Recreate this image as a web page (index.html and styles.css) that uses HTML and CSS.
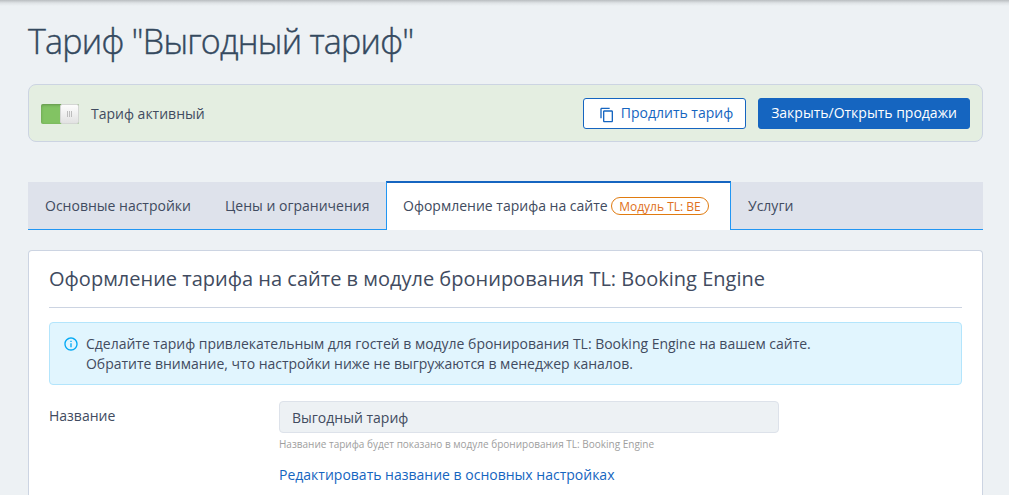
FILE: index.html
```html
<!DOCTYPE html>
<html lang="ru">
<head>
  <meta charset="UTF-8" />
  <meta name="viewport" content="width=device-width, initial-scale=1.0"/>
  <title>Тариф "Выгодный тариф"</title>
  <link rel="stylesheet" href="styles.css">
</head>
<body>

  <div class="page">
    <h1>Тариф "Выгодный тариф"</h1>

    <div class="status-bar">
      <div class="switch"><div class="switch-knob"><i></i><i></i><i></i></div></div>
      <span class="status-text">Тариф активный</span>
      <button class="btn btn-outline">
        <svg class="copy-icon" width="16" height="16" viewBox="0 0 24 24" fill="currentColor">
          <path d="M16 1H4C2.900 1 2 1.900 2 3v14h2V3h12V1zm3 4H8C6.900 5 6 5.900 6 7v14c0 1.100.9 2 2 2h11c1.100 0 2-.9 2-2V7c0-1.100-.9-2-2-2zm0 16H8V7h11v14z"/>
        </svg>
        <span>Продлить тариф</span>
      </button>
      <button class="btn btn-primary">Закрыть/Открыть продажи</button>
    </div>

    <div class="tabs">
      <div class="tab tab-settings">Основные настройки</div>
      <div class="tab tab-prices">Цены и ограничения</div>
      <div class="tab tab-site active"><span>Оформление тарифа на сайте</span><span class="badge">Модуль TL: BE</span></div>
      <div class="tab">Услуги</div>
    </div>

    <div class="card">
      <h2>Оформление тарифа на сайте в модуле бронирования TL: Booking Engine</h2>

      <div class="info">
        <svg class="info-icon" width="16" height="16" viewBox="0 0 24 24" fill="currentColor">
          <path d="M11 7h2v2h-2zm0 4h2v6h-2zm1-9C6.480 2 2 6.480 2 12s4.480 10 10 10 10-4.480 10-10S17.520 2 12 2zm0 18c-4.410 0-8-3.590-8-8s3.590-8 8-8 8 3.590 8 8-3.590 8-8 8z"/>
        </svg>
        <p>Сделайте тариф привлекательным для гостей в модуле бронирования TL: Booking Engine на вашем сайте.<br>Обратите внимание, что настройки ниже не выгружаются в менеджер каналов.</p>
      </div>

      <div class="form-row">
        <label for="tariffName">Название</label>
        <div class="field">
          <input type="text" id="tariffName" value="Выгодный тариф" readonly />
          <div class="hint">Название тарифа будет показано в модуле бронирования TL: Booking Engine</div>
          <a href="#">Редактировать название в основных настройках</a>
        </div>
      </div>
    </div>
  </div>

</body>
</html>
```
FILE: styles.css
```css
:root {
  --bg-color: #edf1f4;
  --text-color: #414b60;
  --border-color: #ccd4e2;
  --accent-color: #1565c0;
  --tab-line: #2196f3;
}

* {
  margin: 0;
  padding: 0;
  box-sizing: border-box;
}

body {
  font-family: 'Open Sans', sans-serif;
  font-size: 14px;
  line-height: 20px;
  background: linear-gradient(#b9bdc0, #dfe3e6 3px, var(--bg-color) 6px);
  color: var(--text-color);
}

.page {
  padding: 19px 26px 0 28px;
}

h1 {
  font-size: 34px;
  font-weight: 300;
  line-height: 44px;
  letter-spacing: -0.75px;
  color: #34495e;
  -webkit-text-stroke: 0.4px #34495e;
}

.status-bar {
  display: flex;
  align-items: center;
  height: 58px;
  margin-top: 21px;
  padding: 0 12px;
  background: #e4eee1;
  border: 1px solid var(--border-color);
  border-radius: 8px;
}

.switch {
  display: flex;
  justify-content: flex-end;
  width: 38px;
  height: 20px;
  margin-top: 2px;
  background: #82c363;
  border-radius: 2px;
  box-shadow: inset 0 1px 3px rgba(0, 0, 0, 0.25);
}

.switch-knob {
  display: flex;
  align-items: center;
  justify-content: center;
  gap: 1px;
  width: 19px;
  background: linear-gradient(#fdfdfd, #e2e2e2);
  border: 1px solid #d4d6d4;
  border-radius: 2px;
}

.switch-knob i {
  width: 1px;
  height: 6px;
  background: #bdbdbd;
}

.status-text {
  margin-top: 2px;
  margin-left: 12px;
  margin-right: auto;
}

.btn {
  display: flex;
  align-items: center;
  justify-content: center;
  height: 31px;
  margin-left: 12px;
  padding-bottom: 2px;
  border: 1px solid var(--accent-color);
  border-radius: 3px;
  font-family: inherit;
  font-size: 14px;
  cursor: pointer;
}

.btn-outline {
  width: 163px;
  padding-left: 3px;
  background: #fff;
  color: var(--accent-color);
}

.btn-primary {
  width: 212px;
  background: var(--accent-color);
  color: #fff;
  font-weight: 500;
}

.copy-icon {
  margin-right: 6px;
  margin-top: 6px;
}

.tabs {
  display: flex;
  align-items: flex-end;
  height: 49px;
  margin-top: 39px;
  background: linear-gradient(transparent 1px, #dee2eb 1px);
}

.tab {
  height: 48px;
  padding: 14px 17px 0;
  border-bottom: 1px solid var(--tab-line);
  white-space: nowrap;
}

.tab:last-child {
  flex: 1;
}

.tab-settings {
  width: 180px;
}

.tab-prices {
  width: 178px;
}

.tab-site {
  width: 345px;
}

.tab.active {
  display: flex;
  height: 49px;
  padding: 13px 16px 0;
  background: #fff;
  border: 1px solid var(--tab-line);
  border-top: 2px solid var(--accent-color);
  border-bottom: none;
}

.badge {
  height: 18px;
  margin: 1px 0 0 3px;
  padding: 0 7.500px;
  border: 1px solid #e07b10;
  border-radius: 9px;
  font-size: 12px;
  line-height: 17px;
  color: #e07020;
}

.card {
  height: 245px;
  margin-top: 20px;
  padding: 0 20px;
  background: #fff;
  border: 1px solid var(--border-color);
  border-bottom: none;
  border-radius: 4px 4px 0 0;
}

h2 {
  height: 57px;
  font-size: 20px;
  font-weight: 400;
  line-height: 56px;
  border-bottom: 1px solid var(--border-color);
}

.info {
  display: flex;
  height: 63px;
  margin-top: 14px;
  padding: 11px 13px;
  background: #e1f5fe;
  border: 1px solid #b3e5fc;
  border-radius: 4px;
  letter-spacing: -0.015px;
}

.info-icon {
  margin: 2px 7px 0 0;
  color: #03a9f4;
}

.form-row {
  display: flex;
  margin-top: 16px;
}

.form-row label {
  width: 230px;
  padding-top: 5px;
}

.field {
  width: 500px;
}

.field input {
  display: block;
  width: 100%;
  height: 32px;
  padding: 0 12px;
  background: var(--bg-color);
  border: 1px solid #dde2ea;
  border-radius: 4px;
  font-family: inherit;
  font-size: 14px;
  color: inherit;
}

.hint {
  margin-top: 3px;
  font-size: 10px;
  line-height: 16px;
  color: #9e9e9e;
}

.field a {
  display: block;
  margin-top: 13px;
  color: var(--accent-color);
  text-decoration: none;
}
```
